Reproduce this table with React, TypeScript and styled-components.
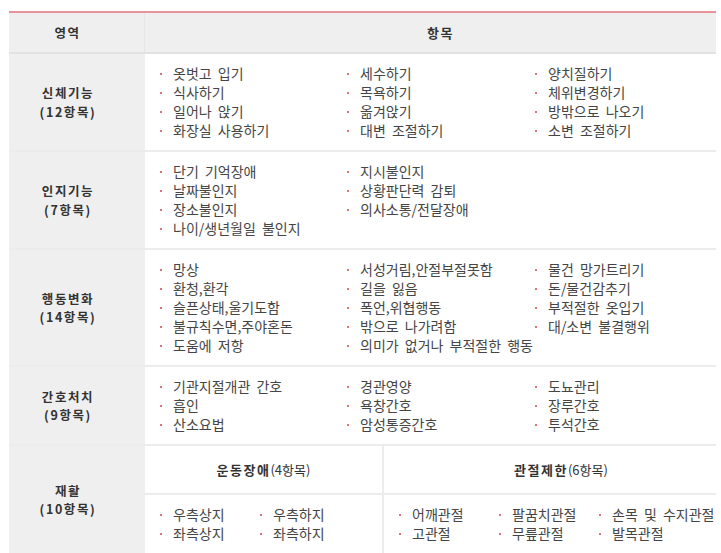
import React from 'react';
import styled, { createGlobalStyle } from 'styled-components';

const Global = createGlobalStyle`
  html, body { margin: 0; padding: 0; background: #fff; overflow: hidden; }
  body { font-family: "Noto Sans CJK KR", "Noto Sans", sans-serif; }
`;

const Page = styled.div`
  padding: 11px 5px 0 9px;
`;

const Table = styled.div`
  width: 707px;
  border-top: 2px solid #e8939b;
  font-size: 14px;
  color: #454545;
`;

const Row = styled.div<{ $head?: boolean }>`
  display: flex;
  min-height: ${p => (p.$head ? '39px' : '0')};
  background: ${p => (p.$head ? '#efefef' : '#fff')};
  border-bottom: 2px solid ${p => (p.$head ? '#e2e2e2' : '#ececec')};
`;

const LabelCell = styled.div<{ $head?: boolean }>`
  flex: none;
  width: 136px;
  box-sizing: border-box;
  padding: 1px 18px 0 0;
  background: #efefef;
  border-right: ${p => (p.$head ? '1px solid #e6e6e6' : 'none')};
  display: flex;
  flex-direction: column;
  align-items: center;
  justify-content: center;
  font-size: 12.5px;
  font-weight: bold;
  color: #333;
  letter-spacing: 1.6px;
  line-height: 18.5px;
`;

const HeadCell = styled.div`
  flex: 1;
  display: flex;
  align-items: center;
  justify-content: center;
  padding-left: 20px;
  font-size: 13px;
  font-weight: bold;
  color: #333;
  letter-spacing: 1.5px;
`;

const ContentCell = styled.div`
  flex: 1;
  display: grid;
  grid-template-columns: 187px 188px 1fr;
  padding: 10px 0 10px 15px;
`;

const List = styled.div`
  display: flex;
  flex-direction: column;
`;

const Item = styled.div`
  display: flex;
  align-items: center;
  line-height: 19px;
  white-space: nowrap;
  word-spacing: 3px;
  &::before {
    content: '';
    flex: none;
    width: 2px;
    height: 2px;
    margin-right: 11px;
    background: #e0727b;
  }
`;

const RehabCell = styled.div`
  flex: 1;
  display: flex;
`;

const SubCol = styled.div<{ $first?: boolean }>`
  display: flex;
  flex-direction: column;
  ${p => (p.$first ? 'width: 237px; flex: none;' : 'flex: 1; border-left: 2px solid #ececec;')}
`;

const SubHead = styled.div<{ $shift?: number }>`
  height: 47px;
  display: flex;
  align-items: center;
  justify-content: center;
  padding-left: ${p => p.$shift ?? 0}px;
  border-bottom: 2px solid #ececec;
  font-size: 13px;
  color: #333;
`;

const SubTitle = styled.b`
  letter-spacing: 1.5px;
`;

const SubItems = styled.div<{ $cols: number }>`
  display: grid;
  grid-template-columns: repeat(${p => p.$cols}, 100px);
  padding: 10px 0 10px 15px;
`;

type Section = { label: string; count: string; cols: string[][] };

const sections: Section[] = [
  {
    label: '신체기능',
    count: '(12항목)',
    cols: [
      ['옷벗고 입기', '식사하기', '일어나 앉기', '화장실 사용하기'],
      ['세수하기', '목욕하기', '옮겨앉기', '대변 조절하기'],
      ['양치질하기', '체위변경하기', '방밖으로 나오기', '소변 조절하기'],
    ],
  },
  {
    label: '인지기능',
    count: '(7항목)',
    cols: [
      ['단기 기억장애', '날짜불인지', '장소불인지', '나이/생년월일 불인지'],
      ['지시불인지', '상황판단력 감퇴', '의사소통/전달장애'],
      [],
    ],
  },
  {
    label: '행동변화',
    count: '(14항목)',
    cols: [
      ['망상', '환청,환각', '슬픈상태,울기도함', '불규칙수면,주야혼돈', '도움에 저항'],
      ['서성거림,안절부절못함', '길을 잃음', '폭언,위협행동', '밖으로 나가려함', '의미가 없거나 부적절한 행동'],
      ['물건 망가트리기', '돈/물건감추기', '부적절한 옷입기', '대/소변 불결행위'],
    ],
  },
  {
    label: '간호처치',
    count: '(9항목)',
    cols: [
      ['기관지절개관 간호', '흡인', '산소요법'],
      ['경관영양', '욕창간호', '암성통증간호'],
      ['도뇨관리', '장루간호', '투석간호'],
    ],
  },
];

const motor = ['우측상지', '우측하지', '좌측상지', '좌측하지'];
const joints = ['어깨관절', '팔꿈치관절', '손목 및 수지관절', '고관절', '무릎관절', '발목관절'];

export default function App() {
  return (
    <Page>
      <Global />
      <Table>
        <Row $head>
          <LabelCell $head>영역</LabelCell>
          <HeadCell>항목</HeadCell>
        </Row>
        {sections.map(s => (
          <Row key={s.label}>
            <LabelCell>
              <span>{s.label}</span>
              <span>{s.count}</span>
            </LabelCell>
            <ContentCell>
              {s.cols.map((c, i) => (
                <List key={i}>
                  {c.map(t => (
                    <Item key={t}>{t}</Item>
                  ))}
                </List>
              ))}
            </ContentCell>
          </Row>
        ))}
        <Row>
          <LabelCell>
            <span>재활</span>
            <span>(10항목)</span>
          </LabelCell>
          <RehabCell>
            <SubCol $first>
              <SubHead>
                <SubTitle>운동장애</SubTitle>(4항목)
              </SubHead>
              <SubItems $cols={2}>
                {motor.map(t => (
                  <Item key={t}>{t}</Item>
                ))}
              </SubItems>
            </SubCol>
            <SubCol>
              <SubHead $shift={22}>
                <SubTitle>관절제한</SubTitle>(6항목)
              </SubHead>
              <SubItems $cols={3}>
                {joints.map(t => (
                  <Item key={t}>{t}</Item>
                ))}
              </SubItems>
            </SubCol>
          </RehabCell>
        </Row>
      </Table>
    </Page>
  );
}
